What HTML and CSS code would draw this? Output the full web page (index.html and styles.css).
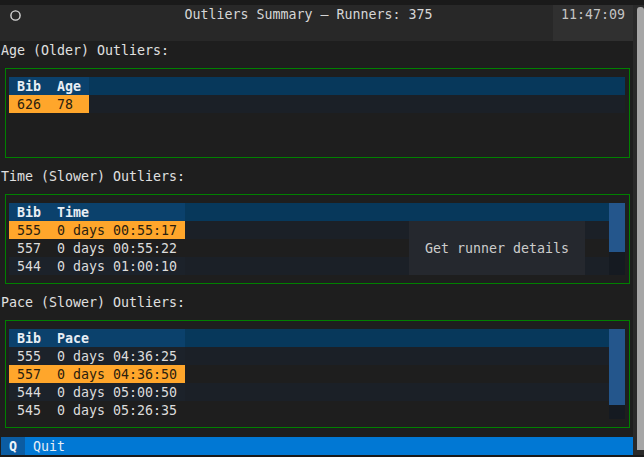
FILE: index.html
```html
<!DOCTYPE html>
<html>
<head>
<meta charset="utf-8">
<link rel="stylesheet" href="styles.css">
</head>
<body>
<div class="app">
  <div class="screen">
    <header class="hdr">
      <div class="hdr-icon"><svg width="24" height="18" viewBox="0 0 24 18"><circle cx="15.5" cy="10.5" r="4.6" fill="none" stroke="#d8d8d8" stroke-width="1.4"/></svg></div>
      <div class="hdr-title">Outliers Summary — Runners: 375</div>
      <div class="hdr-clock">11:47:09</div>
    </header>
    <main class="content">
      <div class="label">Age (Older) Outliers:</div>
      <section class="box h4">
        <div class="table">
          <div class="grid">
            <div class="row head"><span class="cell w3">Bib</span><span class="cell w3">Age</span><span class="fill"></span></div>
            <div class="row stripe cursor"><span class="cell w3">626</span><span class="cell w3">78</span><span class="fill"></span></div>
          </div>
        </div>
      </section>

      <div class="label">Time (Slower) Outliers:</div>
      <section class="box h4">
        <div class="table">
          <div class="grid">
            <div class="row head"><span class="cell w3">Bib</span><span class="cell w15">Time</span><span class="fill"></span></div>
            <div class="row stripe cursor"><span class="cell w3">555</span><span class="cell w15">0 days 00:55:17</span><span class="fill"></span></div>
            <div class="row"><span class="cell w3">557</span><span class="cell w15">0 days 00:55:22</span><span class="fill"></span></div>
            <div class="row stripe"><span class="cell w3">544</span><span class="cell w15">0 days 01:00:10</span><span class="fill"></span></div>
          </div>
          <div class="vscroll"><div class="vthumb t-time"></div></div>
        </div>
        <div class="tooltip">Get runner details</div>
      </section>

      <div class="label">Pace (Slower) Outliers:</div>
      <section class="box h5">
        <div class="table">
          <div class="grid">
            <div class="row head"><span class="cell w3">Bib</span><span class="cell w15">Pace</span><span class="fill"></span></div>
            <div class="row stripe"><span class="cell w3">555</span><span class="cell w15">0 days 04:36:25</span><span class="fill"></span></div>
            <div class="row cursor"><span class="cell w3">557</span><span class="cell w15">0 days 04:36:50</span><span class="fill"></span></div>
            <div class="row stripe"><span class="cell w3">544</span><span class="cell w15">0 days 05:00:50</span><span class="fill"></span></div>
            <div class="row"><span class="cell w3">545</span><span class="cell w15">0 days 05:26:35</span><span class="fill"></span></div>
          </div>
          <div class="vscroll"><div class="vthumb t-pace"></div></div>
        </div>
      </section>
    </main>
    <footer class="ftr">
      <span class="key">Q</span><span class="desc">Quit</span>
    </footer>
  </div>
  <div class="sbar"><div class="sthumb"></div></div>
</div>
</body>
</html>
```

FILE: styles.css
```css
html, body {
  margin: 0;
  padding: 0;
}
body {
  background: #1a1a1a;
  width: 644px;
  height: 457px;
  overflow: hidden;
  font-family: "DejaVu Sans Mono", "Liberation Mono", monospace;
  font-size: 13.29px;
  line-height: 18px;
  color: #e0e0e0;
  padding-top: 5px;
  box-sizing: border-box;
}
.app {
  display: flex;
  height: 450px;
}
.screen {
  width: 633px;
  display: flex;
  flex-direction: column;
  background: #1e1e1e;
}
.hdr {
  display: flex;
  height: 36px;
  background: #282828;
  color: #d6d6d6;
}
.hdr-icon {
  width: 64px;
  height: 18px;
}
.hdr-icon svg {
  display: block;
}
.hdr-title {
  flex: 1;
  text-align: center;
  height: 18px;
  padding-top: 1px;
  white-space: pre;
}
.hdr-clock {
  width: 80px;
  background: #303030;
  color: #c4c4c4;
  text-align: center;
  padding-top: 1px;
  box-sizing: border-box;
}
.content {
  padding-left: 1px;
  height: 396px;
  display: flex;
  flex-direction: column;
}
.label {
  height: 18px;
  padding-top: 1px;
  box-sizing: border-box;
  white-space: pre;
}
.box {
  position: relative;
  margin: 9px 3px 9px 4px;
  border: 1px solid #008000;
  padding: 8px 4px 8px 3px;
}
.box.h4 { height: 72px; }
.box.h5 { height: 90px; }
.table {
  display: flex;
  height: 100%;
}
.grid {
  flex: 1;
  display: flex;
  flex-direction: column;
}
.row {
  display: flex;
  height: 18px;
  color: #dcdcdc;
  white-space: pre;
}
.cell {
  padding-left: 8px;
  padding-top: 1px;
  height: 18px;
  box-sizing: border-box;
}
.w3 { width: 40px; }
.w15 { width: 136px; }
.fill { flex: 1; }
.row.head { font-weight: bold; color: #e8eef4; }
.row.head .cell { background: #0b416c; }
.row.head .fill { background: #07385b; }
.row.stripe .cell { background: #1c222a; }
.row.stripe .fill { background: #1b2027; }
.row.cursor .cell { background: #ffa62b; color: #2a200f; }
.vscroll {
  width: 16px;
  background: #151a21;
}
.vthumb {
  background: #24568c;
}
.t-time { height: 49px; }
.t-pace { height: 76px; }
.tooltip {
  position: absolute;
  left: 403px;
  top: 26px;
  width: 176px;
  height: 54px;
  box-sizing: border-box;
  padding: 19px 16px 0 16px;
  background: #25282e;
  color: #cccccc;
  white-space: pre;
}
.ftr {
  height: 18px;
  margin-left: 1px;
  background: #0178d4;
  display: flex;
  white-space: pre;
}
.key {
  width: 24px;
  text-align: center;
  background: #0b5ca2;
  color: #eef4fa;
  font-weight: bold;
  padding-top: 1px;
  box-sizing: border-box;
}
.desc {
  padding-left: 8px;
  padding-top: 1px;
  color: #e6eef6;
}
.sbar {
  width: 11px;
  background: #2a2a2a;
  display: flex;
  justify-content: flex-end;
  padding-top: 2px;
  box-sizing: border-box;
}
.sthumb {
  width: 7px;
  height: 443px;
  background: #a6a6a6;
  border-radius: 3px 3px 0 0;
}
```
